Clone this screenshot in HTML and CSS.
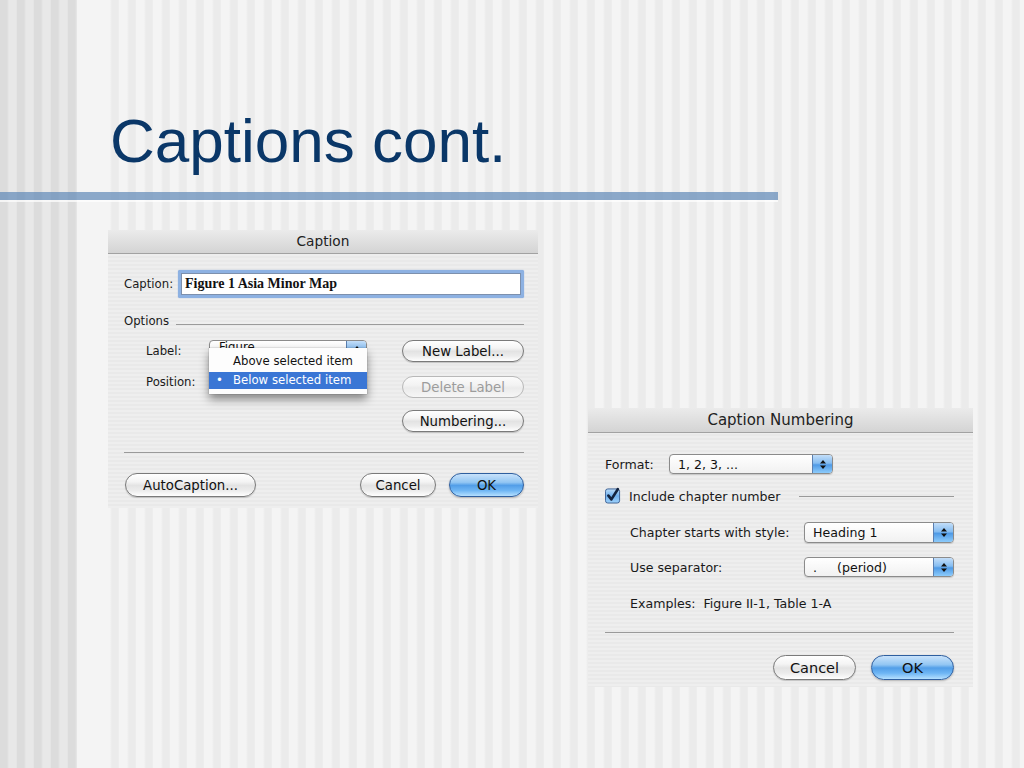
FILE: index.html
```html
<!DOCTYPE html>
<html>
<head>
<meta charset="utf-8">
<title>Captions cont.</title>
<link rel="stylesheet" href="styles.css">
</head>
<body>
<div class="slide">
  <h1 class="title">Captions cont.</h1>
  <div class="rule"></div>
  <div class="stage">
    <div class="dlg dlg1">
      <div class="tbar">Caption</div>
      <div class="dbody1">
        <div class="row caprow">
          <span class="caplbl">Caption:</span>
          <div class="field">Figure 1 Asia Minor Map</div>
        </div>
        <div class="row grouprow">
          <span>Options</span>
          <span class="hline"></span>
        </div>
        <div class="opts">
          <div class="optsleft">
            <div class="row lrow"><span class="lw">Label:</span>
              <div class="popup pw1"><span class="ptext">Figure</span>
                <span class="parrow"><svg width="8" height="11" viewBox="0 0 8 11"><path d="M4 1 L7 4.5 L1 4.5 Z M4 10 L7 6.5 L1 6.5 Z" fill="#111"/></svg></span>
              </div>
            </div>
            <div class="row lrow lrow2"><span class="lw">Position:</span></div>
            <div class="menu">
              <div class="mitem mfirst"><span class="mbul"></span>Above selected item</div>
              <div class="mitem msel"><span class="mbul">•</span>Below selected item</div>
            </div>
          </div>
          <div class="optsright">
            <div class="btn b1">New Label...</div>
            <div class="btn b1 b1del disabled">Delete Label</div>
            <div class="btn b1 b1num">Numbering...</div>
          </div>
        </div>
        <div class="sep sep1"></div>
        <div class="row btnrow1">
          <div class="btn bb1 bauto">AutoCaption...</div>
          <div class="spacer"></div>
          <div class="btn bb1 bcancel1">Cancel</div>
          <div class="btn bb1 bok ok1">OK</div>
        </div>
      </div>
    </div>

    <div class="dlg dlg2">
      <div class="tbar">Caption Numbering</div>
      <div class="dbody2">
        <div class="row fmtrow">
          <span class="fmtlbl">Format:</span>
          <div class="popup pw2"><span class="ptext">1, 2, 3, ...</span>
            <span class="parrow"><svg width="8" height="11" viewBox="0 0 8 11"><path d="M4 1 L7 4.5 L1 4.5 Z M4 10 L7 6.5 L1 6.5 Z" fill="#111"/></svg></span>
          </div>
        </div>
        <div class="row chkrow">
          <span class="chk"><svg width="17" height="17" viewBox="0 0 17 17">
            <defs><linearGradient id="cg" x1="0" y1="0" x2="0" y2="1"><stop offset="0" stop-color="#bcdcf8"/><stop offset="0.5" stop-color="#6fb0ee"/><stop offset="1" stop-color="#9fd2fb"/></linearGradient></defs>
            <rect x="0.5" y="1.5" width="15" height="15" rx="2.5" fill="url(#cg)" stroke="#3b5f93"/>
            <path d="M3.6 8.6 L6.8 12.6 L13.6 1.8" fill="none" stroke="#13233f" stroke-width="2.8" stroke-linecap="round" stroke-linejoin="round"/>
          </svg></span>
          <span class="chktxt">Include chapter number</span>
          <span class="hline hline2"></span>
        </div>
        <div class="row subrow chaprow">
          <span class="sublbl">Chapter starts with style:</span>
          <div class="popup pw3"><span class="ptext">Heading 1</span>
            <span class="parrow"><svg width="8" height="11" viewBox="0 0 8 11"><path d="M4 1 L7 4.5 L1 4.5 Z M4 10 L7 6.5 L1 6.5 Z" fill="#111"/></svg></span>
          </div>
        </div>
        <div class="row subrow seprow">
          <span class="sublbl">Use separator:</span>
          <div class="popup pw3"><span class="ptext"><span class="dot">.</span>(period)</span>
            <span class="parrow"><svg width="8" height="11" viewBox="0 0 8 11"><path d="M4 1 L7 4.5 L1 4.5 Z M4 10 L7 6.5 L1 6.5 Z" fill="#111"/></svg></span>
          </div>
        </div>
        <div class="row subrow exrow">Examples:&nbsp; Figure II-1, Table 1-A</div>
        <div class="sep sep2"></div>
        <div class="row btnrow2">
          <div class="btn bb2 bcancel2">Cancel</div>
          <div class="btn bb2 bok ok2">OK</div>
        </div>
      </div>
    </div>
  </div>
</div>
</body>
</html>
```

FILE: styles.css
```css
* { box-sizing: border-box; }
html, body { margin: 0; padding: 0; }
body {
  width: 1024px;
  height: 768px;
  overflow: hidden;
  font-family: "DejaVu Sans", "Liberation Sans", sans-serif;
  color: #1a1a1a;
  background:
    repeating-linear-gradient(90deg, #dcdcdc 0 7px, #e2e2e2 8px, #e8e8e8 9px 16px, #e2e2e2 17px) 0 0 / 77px 100% no-repeat,
    linear-gradient(#f4f4f4, #f4f4f4) 77px 0 / 28px 100% no-repeat,
    repeating-linear-gradient(90deg, #f4f4f4 0 8px, #efefef 9px, #ebebeb 10px 16px, #efefef 17px);
}
.slide { width: 1024px; height: 768px; }
.title {
  margin: 0;
  height: 192px;
  padding: 110px 0 0 110px;
  font-family: "Liberation Sans", Arial, sans-serif;
  font-weight: normal;
  font-size: 62px;
  line-height: 62px;
  color: #0a3768;
}
.rule {
  width: 778px;
  height: 8px;
  background: rgba(98, 138, 184, 0.72);
  box-shadow: 0 2px 0 rgba(255, 255, 255, 0.7);
}
.stage {
  display: flex;
  align-items: flex-start;
  padding-left: 108px;
  margin-top: 30px;
}
.row { display: flex; align-items: center; }
.dlg {
  background: repeating-linear-gradient(180deg, #eeeeee 0 2px, #e9e9e9 2px 4px);
  flex: none;
}
.tbar {
  text-align: center;
  color: #222;
  background: linear-gradient(#ebebeb, #d4d4d4);
  border-bottom: 1px solid #a2a2a2;
}
.hline { flex: 1; height: 1px; background: #9a9a9a; }
.sep { height: 1px; background: #9a9a9a; }
.spacer { flex: 1; }

/* buttons */
.btn {
  display: flex;
  align-items: center;
  justify-content: center;
  border: 1px solid #7a7a7a;
  border-radius: 13px;
  color: #111;
  background: linear-gradient(#ffffff 0%, #f4f4f4 35%, #e3e3e3 52%, #ececec 75%, #ffffff 100%);
  box-shadow: 0 1px 1px rgba(0, 0, 0, 0.18);
}
.btn.disabled {
  color: #9c9c9c;
  border-color: #b8b8b8;
  background: linear-gradient(#fbfbfb 0%, #f3f3f3 40%, #ebebeb 55%, #f6f6f6 100%);
  box-shadow: none;
}
.bok {
  border-color: #2f5f9f;
  background: linear-gradient(#c8e2fb 0%, #92c6f3 38%, #529ee8 52%, #6fb6f4 75%, #b5e0ff 100%);
  box-shadow: 0 1px 2px rgba(0, 0, 0, 0.25);
}

/* popups */
.popup {
  position: relative;
  display: flex;
  align-items: center;
  border: 1px solid #8b8b8b;
  border-radius: 4px;
  background: linear-gradient(#ffffff, #f1f1f1);
  box-shadow: 0 1px 1px rgba(0, 0, 0, 0.15);
  overflow: hidden;
}
.ptext { flex: 1; padding-left: 8px; color: #111; white-space: nowrap; }
.parrow {
  width: 20px;
  align-self: stretch;
  display: flex;
  align-items: center;
  justify-content: center;
  border-left: 1px solid #5b7fb0;
  background: linear-gradient(#c3def9 0%, #86bdf1 45%, #4f9ae6 55%, #8ccbfb 100%);
}

/* ---------- dialog 1 ---------- */
.dlg1 { width: 430px; height: 278px; font-size: 11.7px; }
.dlg1 .tbar { height: 24px; line-height: 23px; font-size: 13.7px; }
.dbody1 { padding: 16px 14px 0 16px; }
.caprow { height: 28px; }
.caplbl { width: 54px; }
.field {
  width: 346px;
  height: 28px;
  border: 3px solid #8db1e2;
  border-radius: 2px;
  background: #fff;
  box-shadow: inset 0 0 0 1px #7d90ad, 0 0 1px #6d97d2;
  font-family: "Liberation Serif", "Times New Roman", serif;
  font-weight: bold;
  font-size: 14px;
  line-height: 22px;
  padding-left: 4px;
  color: #111;
}
.grouprow { height: 14px; margin-top: 16px; }
.grouprow .hline { margin-left: 7px; margin-top: 6px; }
.opts { display: flex; margin-top: 12px; }
.optsleft { flex: 1; position: relative; }
.lrow { height: 21px; padding-left: 22px; }
.lrow2 { margin-top: 10px; }
.lw { width: 63px; }
.pw1 { width: 158px; height: 21px; }
.pw1 .ptext { padding-left: 9px; font-size: 11.7px; line-height: 11px; align-self: flex-start; padding-top: 1px; }
.menu {
  position: absolute;
  left: 85px;
  top: 8px;
  width: 158px;
  padding: 4px 0 5px;
  background: #fdfdfd;
  box-shadow: 0 5px 9px rgba(0, 0, 0, 0.45), 0 0 1px rgba(0, 0, 0, 0.4);
}
.mitem { height: 18px; line-height: 18px; display: flex; color: #111; }
.mfirst { height: 20px; line-height: 19px; }
.mbul { width: 24px; padding-left: 7px; }
.msel { height: 17px; line-height: 16px; background: #3a76d5; color: #fff; font-weight: 500; }
.optsright { width: 122px; display: flex; flex-direction: column; }
.b1 { height: 22px; font-size: 13.3px; }
.b1del { margin-top: 14px; }
.b1num { margin-top: 12px; }
.sep1 { margin-top: 20px; }
.btnrow1 { margin-top: 20px; height: 24px; }
.bb1 { height: 24px; font-size: 13.3px; }
.bauto { width: 131px; margin-left: 1px; }
.bcancel1 { width: 76px; }
.ok1 { width: 75px; margin-left: 13px; }

/* ---------- dialog 2 ---------- */
.dlg2 { width: 385px; height: 279px; margin-left: 50px; margin-top: 178px; font-size: 12.6px; }
.dlg2 .tbar { height: 25px; line-height: 24px; font-size: 15px; }
.dbody2 { padding: 21px 19px 0 17px; }
.fmtrow { height: 20px; }
.fmtlbl { width: 64px; }
.pw2 { width: 164px; height: 20px; }
.chkrow { height: 16px; margin-top: 14px; }
.chk { width: 16px; height: 16px; display: flex; margin-top: -2px; }
.chktxt { margin-left: 8px; }
.hline2 { margin-left: 19px; }
.subrow { padding-left: 25px; }
.sublbl { width: 174px; }
.chaprow { height: 21px; margin-top: 18px; }
.seprow { height: 20px; margin-top: 14px; }
.pw3 { width: 150px; height: 100%; }
.pw3 .ptext { padding-left: 8px; }
.dot { display: inline-block; width: 24px; }
.exrow { height: 15px; margin-top: 19px; }
.sep2 { margin-top: 21px; }
.btnrow2 { margin-top: 22px; height: 25px; justify-content: flex-end; }
.bb2 { height: 25px; font-size: 14.5px; }
.bcancel2 { width: 83px; }
.ok2 { width: 83px; margin-left: 15px; }
```
